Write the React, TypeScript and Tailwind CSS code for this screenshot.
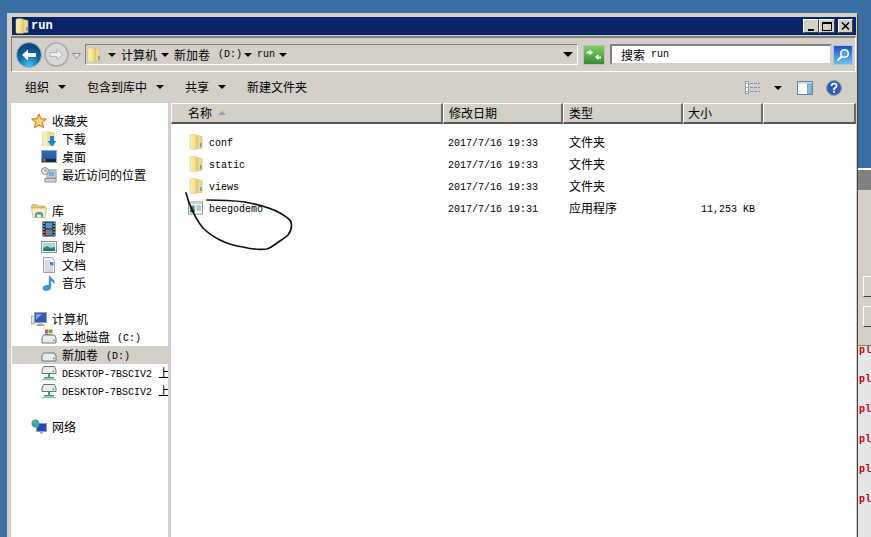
import { useId } from 'react';

const CJK = '"Noto Sans CJK SC", "Liberation Sans", sans-serif';

function Lat({ children, bold, className = '' }: { children: React.ReactNode; bold?: boolean; className?: string }) {
  return <span className={`font-['Liberation_Mono',monospace] text-[10px] ${bold ? 'font-bold' : ''} ${className}`}>{children}</span>;
}

function Caret({ className = '' }: { className?: string }) {
  return <span className={`inline-block h-0 w-0 shrink-0 border-x-[4px] border-t-[4px] border-x-transparent border-t-black ${className}`} />;
}

function Folder({ size = 16 }: { size?: number }) {
  const id = useId();
  return (
    <svg width={size} height={size} viewBox="0 0 16 16" className="shrink-0">
      <defs>
        <linearGradient id={id} x1="0" x2="1" y1="0" y2="0">
          <stop offset="0" stopColor="#fdf3c0" />
          <stop offset="0.6" stopColor="#f6e08e" />
          <stop offset="1" stopColor="#e2c670" />
        </linearGradient>
      </defs>
      <path d="M9 1.5 L14 2.5 V14.5 H9 Z" fill="#efd888" stroke="#d2b766" strokeWidth="0.6" />
      <rect x="12" y="9" width="1.6" height="4" fill="#58a4c8" />
      <path d="M2 2 Q2 .8 3.2 .8 L8 .8 Q9.4 1 9.4 2.4 V15.2 H3.2 Q2 15.2 2 14 Z" fill={`url(#${id})`} stroke="#dcc272" strokeWidth="0.6" />
    </svg>
  );
}

function Star() {
  return (
    <svg width="16" height="16" viewBox="0 0 16 16">
      <path d="M8 .8 L10.1 5.6 L15.4 6.1 L11.4 9.6 L12.6 14.8 L8 12.1 L3.4 14.8 L4.6 9.6 L.6 6.1 L5.9 5.6 Z" fill="#fbc24a" stroke="#d8752a" strokeWidth="1" />
      <path d="M8 4 L9 7 L12 7.5 L9.5 9.5 L10 12 L8 10.6 L6 12 L6.5 9.5 L4 7.5 L7 7 Z" fill="#fde48f" />
    </svg>
  );
}

function Downloads() {
  return (
    <svg width="16" height="16" viewBox="0 0 16 16">
      <path d="M1.5 1 H8 L13 2 V14.5 H1.5 Z" fill="#f2dc95" stroke="#d3b96a" strokeWidth="0.7" />
      <path d="M1.5 1 H6.5 V15 H1.5 Z" fill="#f9edbb" />
      <path d="M9 5 H13 V10 H15.5 L11 15.5 L6.5 10 H9 Z" fill="#1f7fd0" />
    </svg>
  );
}

function Desktop() {
  return (
    <svg width="16" height="16" viewBox="0 0 16 16">
      <rect x="0.5" y="1.5" width="15" height="12" fill="#1d4f9c" stroke="#8faecb" />
      <rect x="1" y="2" width="14" height="7" fill="#2c62b2" />
      <rect x="1" y="10" width="14" height="3" fill="#1e2a3c" />
      <rect x="2" y="10" width="2.5" height="2.5" fill="#e45d3a" />
    </svg>
  );
}

function Recent() {
  return (
    <svg width="16" height="16" viewBox="0 0 16 16">
      <rect x="6" y="3" width="9" height="8" fill="#e4e6e4" stroke="#8a8f8f" />
      <rect x="7.5" y="4.5" width="6" height="5" fill="#6fb0c9" />
      <rect x="4" y="11.5" width="11" height="3.5" fill="#d2d4d2" stroke="#8a8f8f" />
      <circle cx="4" cy="4" r="3.4" fill="#eef0ee" stroke="#7f8585" />
      <path d="M4 2 V4 H6" fill="none" stroke="#555" strokeWidth="0.8" />
    </svg>
  );
}

function Library() {
  return (
    <svg width="16" height="16" viewBox="0 0 16 16">
      <path d="M0.5 3 Q0.5 1.5 2 1.5 H6 L7.5 3 H14 V5 H.5 Z" fill="#e5c877" stroke="#c6a758" strokeWidth="0.6" />
      <path d="M.5 5 H15.5 L14 14.5 H2 Z" fill="#fbeeb8" stroke="#c9ad5e" strokeWidth="0.7" />
      <path d="M4 14 V10.5 Q8 7 12 10.5 V14 H10 V11.5 H6 V14 Z" fill="#4f92c4" />
    </svg>
  );
}

function Video() {
  return (
    <svg width="16" height="16" viewBox="0 0 16 16">
      <rect x="1.5" y="0.5" width="13" height="15" fill="#10202a" />
      <rect x="4.5" y="1.5" width="7" height="6" fill="#4d98d6" />
      <rect x="4.5" y="8.5" width="7" height="6" fill="#c46a45" />
      <path d="M5 13 L9 9.5 L11 11 V14 H5 Z" fill="#3f8fd0" />
      {[2, 5, 8, 11, 14].map(y => (
        <g key={y}>
          <rect x="2.3" y={y - 0.5} width="1.3" height="1.3" fill="#d7eef5" />
          <rect x="12.4" y={y - 0.5} width="1.3" height="1.3" fill="#d7eef5" />
        </g>
      ))}
    </svg>
  );
}

function Picture() {
  return (
    <svg width="16" height="16" viewBox="0 0 16 16">
      <rect x="0.5" y="2.5" width="15" height="11" fill="#eef3f3" stroke="#8e9694" />
      <rect x="2" y="4" width="12" height="8" fill="#a8d4ea" />
      <path d="M2 9 L6 7 L10 9 L14 7.5 V12 H2 Z" fill="#3d8a5a" />
      <rect x="2" y="10.5" width="12" height="1.5" fill="#1f6e9c" />
    </svg>
  );
}

function Doc() {
  return (
    <svg width="16" height="16" viewBox="0 0 16 16">
      <path d="M2.5 .5 H10.5 L13.5 3.5 V15.5 H2.5 Z" fill="#f6f7fb" stroke="#9a9fb0" />
      <path d="M4 4 H9 M4 6 H8 M4 8 H8 M4 10 H12 M4 12 H12 M4 14 H12" stroke="#a5aec8" strokeWidth="0.8" />
      <rect x="9" y="5" width="3.5" height="3.5" fill="#4b8ed0" />
    </svg>
  );
}

function Music() {
  return (
    <svg width="16" height="16" viewBox="0 0 16 16">
      <path d="M8.5 .5 Q9.5 3 12.5 5 Q14 6.5 13 8.5 Q12.5 6.5 9.8 5.5 V12.5 Q9.5 15.5 5 15.5 Q1.5 15.5 2 12.5 Q3 9.8 7 10.2 L8 10.5 Z" fill="#3a94d8" stroke="#2a78b8" strokeWidth="0.5" />
    </svg>
  );
}

function Computer() {
  return (
    <svg width="16" height="16" viewBox="0 0 16 16">
      <rect x="0.5" y="5" width="3" height="8" fill="#dfe3e3" stroke="#8d9595" strokeWidth="0.7" />
      <rect x="3.5" y="1.5" width="12" height="10" fill="#2c56c0" stroke="#93a2a8" />
      <path d="M5 3 H11 L5 9 Z" fill="#7da0e8" />
      <rect x="7.5" y="11.5" width="4" height="2" fill="#b5bcbc" />
      <rect x="5.5" y="13.5" width="8" height="1.5" fill="#8d9595" />
    </svg>
  );
}

function Drive({ win, net }: { win?: boolean; net?: boolean }) {
  return (
    <svg width="16" height="16" viewBox="0 0 16 16">
      {win && (
        <g>
          <rect x="4" y="0.5" width="3.5" height="3.5" fill="#e2572c" />
          <rect x="8" y="0.5" width="3.5" height="3.5" fill="#6aaf3c" />
          <rect x="4" y="4.5" width="3.5" height="3.5" fill="#3a76d0" />
          <rect x="8" y="4.5" width="3.5" height="3.5" fill="#f0c030" />
        </g>
      )}
      <path d={net ? 'M2.5 1.5 H13.5 L15 5 V8.5 H1 V5 Z' : 'M2.5 6 H13.5 L15 9 V14 H1 V9 Z'} fill="#e8ecec" stroke="#6d7676" />
      <rect x={net ? 11.5 : 12} y={net ? 5.5 : 10.5} width="1.6" height="1.6" fill="#55b34a" />
      {net && (
        <g>
          <rect x="7" y="9" width="2" height="3" fill="#2fb36a" />
          <rect x="3" y="12" width="10" height="1.6" fill="#2fb36a" />
          <rect x="1" y="14" width="14" height="1.2" fill="#a8b2b2" />
        </g>
      )}
    </svg>
  );
}

function Network() {
  return (
    <svg width="16" height="16" viewBox="0 0 16 16">
      <rect x="5.5" y="4.5" width="10" height="8" fill="#2248c0" stroke="#93a2a8" />
      <rect x="9" y="12.5" width="3" height="2" fill="#a8b2b2" />
      <circle cx="4.5" cy="4.5" r="4" fill="#3a9ad8" />
      <path d="M2 2.5 Q4 1 5.5 2.5 L4 5 L2 5 Z" fill="#4fb848" />
      <path d="M5 6 L7.5 5 L7 7.5 L5 8 Z" fill="#4fb848" />
    </svg>
  );
}

function ExeIcon() {
  return (
    <svg width="16" height="14" viewBox="0 0 16 14">
      <rect x="0.5" y="0.5" width="15" height="13" fill="#f4f7f8" stroke="#8b9396" />
      <rect x="1" y="1" width="14" height="2" fill="#c9d3d8" />
      <rect x="2" y="4.5" width="5" height="7" fill="#2f8a8a" />
      <path d="M2 11.5 L5 7.5 L7 9.5 V11.5 Z" fill="#2d5a30" />
      <path d="M9 5 H14 M9 7 H14 M9 9 H14" stroke="#7d9bb0" />
    </svg>
  );
}

function ViewsIcon() {
  return (
    <svg width="15" height="13" viewBox="0 0 15 13">
      <rect x="0.5" y="0.5" width="3" height="12" fill="#fff" stroke="#7d9ab8" />
      <rect x="1.5" y="2" width="1" height="1" fill="#c0392b" />
      <rect x="1.5" y="6" width="1" height="1" fill="#c0392b" />
      <rect x="1.5" y="10" width="1" height="1" fill="#c0392b" />
      <path d="M5 2.5 H15 M5 6.5 H15 M5 10.5 H15" stroke="#7f93aa" strokeDasharray="3 1" />
    </svg>
  );
}

function PaneIcon() {
  return (
    <svg width="16" height="14" viewBox="0 0 16 14">
      <rect x="0.5" y="0.5" width="15" height="13" fill="#fff" stroke="#5f86a5" />
      <rect x="1" y="1" width="14" height="2" fill="#cfe0ec" />
      <rect x="10.5" y="3" width="4.5" height="10" fill="#7fc0d8" stroke="#5f86a5" strokeWidth="0.6" />
    </svg>
  );
}

function HelpIcon() {
  return (
    <svg width="16" height="16" viewBox="0 0 16 16">
      <circle cx="8" cy="8" r="7.5" fill="#2f5fb5" stroke="#9aa3b5" />
      <path d="M5.5 6 Q5.8 3.5 8.2 3.5 Q10.8 3.6 10.6 5.8 Q10.4 7.2 8.8 8 Q8 8.6 8 10" fill="none" stroke="#fff" strokeWidth="1.7" />
      <rect x="7.1" y="10.8" width="1.8" height="1.8" fill="#fff" />
    </svg>
  );
}

function NavButtons() {
  return (
    <div className="flex items-center">
      <svg width="26" height="26" viewBox="0 0 26 26">
        <defs>
          <radialGradient id="backFill" cx="0.5" cy="0.9" r="0.75">
            <stop offset="0" stopColor="#3fc3f0" />
            <stop offset="0.55" stopColor="#0c6fae" />
            <stop offset="1" stopColor="#0a4a7e" />
          </radialGradient>
        </defs>
        <circle cx="13" cy="13" r="12.5" fill="url(#backFill)" stroke="#9fb4c4" />
        <path d="M6 13 L12 7.5 V11 H20 V15 H12 V18.5 Z" fill="#fff" />
      </svg>
      <svg width="25" height="25" viewBox="0 0 25 25" className="ml-[2px]">
        <circle cx="12.5" cy="12.5" r="11.5" fill="#d8d8d8" stroke="#a9a9a9" strokeWidth="1.5" />
        <path d="M19 12.5 L13 7.5 V10.5 H6 V14.5 H13 V17.5 Z" fill="#ececec" stroke="#a8a8a8" strokeWidth="0.8" />
      </svg>
      <svg width="9" height="6" viewBox="0 0 9 6" className="ml-[3px] mt-[2px]">
        <path d="M.5 .5 H8.5 L4.5 5.5 Z" fill="#e8e8e8" stroke="#8a8a8a" />
      </svg>
    </div>
  );
}

function AddressBar() {
  return (
    <div className="mt-[1px] flex h-[36px] items-center border border-t-2 border-[#808080] border-r-white border-b-white pl-[4px]">
      <NavButtons />
      <div className="ml-[4px] flex h-[21px] w-[493px] items-center border-t border-l border-[#808080] bg-[#d4d0c8] border-r border-b border-r-white border-b-white text-[12px]">
        <Folder size={16} />
        <Caret className="ml-[6px]" />
        <span className="ml-[5px]">计算机</span>
        <Caret className="ml-[4px]" />
        <span className="ml-[5px]">新加卷</span>
        <Lat className="ml-[8px]">(D:)</Lat>
        <Caret className="ml-[2px]" />
        <Lat className="ml-[5px]">run</Lat>
        <Caret className="ml-[4px]" />
      </div>
      <Caret className="ml-[-15px] mr-[6px] border-x-[5px] border-t-[5px]" />
      <div className="ml-[4px] flex h-[20px] w-[22px] items-center justify-center border border-[#b5c4b5] bg-gradient-to-b from-[#7fcf5f] to-[#2f8f2f]">
        <svg width="16" height="12" viewBox="0 0 16 12">
          <path d="M7 3.5 L3.5 .5 V2.5 H0.5 V4.5 H3.5 V6.5 Z" fill="#fff" />
          <path d="M9 8 L12.5 11.5 V9.5 H15 V7.5 H12.5 V5 Z" fill="#fff" />
        </svg>
      </div>
      <div className="ml-[5px] flex h-[21px] w-[222px] items-center border-2 border-[#808080] border-r-[#d4d0c8] border-b-[#d4d0c8] bg-white pl-[9px] text-[12px] text-black">
        <span>搜索</span>
        <Lat className="ml-[6px]">run</Lat>
      </div>
      <div className="ml-[1px] flex h-[20px] w-[20px] items-center justify-center border border-[#a9c4e4] bg-gradient-to-b from-[#1f4fc8] to-[#6fc0ee]">
        <svg width="14" height="14" viewBox="0 0 14 14">
          <circle cx="8.5" cy="5.5" r="3.8" fill="#5f9fe0" stroke="#fff" strokeWidth="1.6" />
          <path d="M5.5 8.5 L1.5 12.5" stroke="#fff" strokeWidth="2.2" />
        </svg>
      </div>
    </div>
  );
}

function Toolbar() {
  return (
    <div className="flex h-[31px] items-center text-[12px] text-black">
      <div className="flex items-center pb-[2px]">
        <span className="ml-[14px]">组织</span>
        <Caret className="ml-[9px]" />
        <span className="ml-[21px]">包含到库中</span>
        <Caret className="ml-[9px]" />
        <span className="ml-[21px]">共享</span>
        <Caret className="ml-[9px]" />
        <span className="ml-[21px]">新建文件夹</span>
      </div>
      <div className="ml-auto flex items-center pr-[14px]">
        <ViewsIcon />
        <Caret className="ml-[14px]" />
        <span className="ml-[15px]"><PaneIcon /></span>
        <span className="ml-[13px]"><HelpIcon /></span>
      </div>
    </div>
  );
}

type NavItem = { label: React.ReactNode; icon: React.ReactNode; selected?: boolean };

const groups: { head: NavItem; items: NavItem[] }[] = [
  {
    head: { label: '收藏夹', icon: <Star /> },
    items: [
      { label: '下载', icon: <Downloads /> },
      { label: '桌面', icon: <Desktop /> },
      { label: '最近访问的位置', icon: <Recent /> },
    ],
  },
  {
    head: { label: '库', icon: <Library /> },
    items: [
      { label: '视频', icon: <Video /> },
      { label: '图片', icon: <Picture /> },
      { label: '文档', icon: <Doc /> },
      { label: '音乐', icon: <Music /> },
    ],
  },
  {
    head: { label: '计算机', icon: <Computer /> },
    items: [
      { label: <>本地磁盘<Lat className="ml-[7px] align-[1px]">(C:)</Lat></>, icon: <Drive win /> },
      { label: <>新加卷<Lat className="ml-[8px] align-[1px]">(D:)</Lat></>, icon: <Drive />, selected: true },
      { label: <><Lat className="align-[1px]">DESKTOP-7BSCIV2</Lat><span className="ml-[6px]">上</span></>, icon: <Drive net /> },
      { label: <><Lat className="align-[1px]">DESKTOP-7BSCIV2</Lat><span className="ml-[6px]">上</span></>, icon: <Drive net /> },
    ],
  },
  { head: { label: '网络', icon: <Network /> }, items: [] },
];

function Sidebar() {
  return (
    <aside className="flex w-[157px] shrink-0 flex-col gap-[18px] overflow-hidden bg-white pt-[9px] text-[12px] text-black">
      {groups.map((g, i) => (
        <div key={i} className="flex flex-col">
          <div className="flex h-[18px] items-center gap-[5px] pl-[20px]">
            {g.head.icon}
            <span className="whitespace-nowrap">{g.head.label}</span>
          </div>
          {g.items.map((item, j) => (
            <div
              key={j}
              className={`ml-[1px] flex h-[18px] items-center gap-[5px] pl-[29px] ${item.selected ? 'bg-[#d4d0c8]' : ''}`}
            >
              <span className="shrink-0">{item.icon}</span>
              <span className="whitespace-nowrap">{item.label}</span>
            </div>
          ))}
        </div>
      ))}
    </aside>
  );
}

const columns = [
  { label: '名称', w: 'w-[272px]', pl: 'pl-[16px]', sort: true },
  { label: '修改日期', w: 'w-[120px]', pl: 'pl-[5px]' },
  { label: '类型', w: 'w-[120px]', pl: 'pl-[5px]' },
  { label: '大小', w: 'w-[80px]', pl: 'pl-[4px]' },
  { label: '', w: 'flex-1', pl: '' },
];

const files = [
  { name: 'conf', icon: <Folder />, date: '2017/7/16 19:33', type: '文件夹', size: '' },
  { name: 'static', icon: <Folder />, date: '2017/7/16 19:33', type: '文件夹', size: '' },
  { name: 'views', icon: <Folder />, date: '2017/7/16 19:33', type: '文件夹', size: '' },
  { name: 'beegodemo', icon: <ExeIcon />, date: '2017/7/16 19:31', type: '应用程序', size: '11,253 KB' },
];

function FileList() {
  return (
    <section className="relative flex flex-1 flex-col bg-white text-[12px] text-black">
      <div className="flex h-[21px] shrink-0 bg-[#d4d0c8]">
        {columns.map((c, i) => (
          <div
            key={i}
            className={`flex items-center border-t border-l border-t-white border-l-white border-r-2 border-b-2 border-r-[#6b6b6b] border-b-[#555555] ${c.w} ${c.pl}`}
          >
            {c.label}
            {c.sort && <span className="ml-[6px] inline-block h-0 w-0 border-x-[4px] border-b-[4px] border-x-transparent border-b-[#a0a0a0]" />}
          </div>
        ))}
      </div>
      <div className="flex flex-col pt-[7px]">
        {files.map(f => (
          <div key={f.name} className="flex h-[22px] items-center">
            <div className="flex w-[272px] items-center gap-[6px] pl-[17px]">
              <span className="flex w-[15px] shrink-0 justify-center">{f.icon}</span>
              <Lat className="pt-[2px]">{f.name}</Lat>
            </div>
            <div className="w-[121px] pb-[2px] pl-[5px]"><Lat>{f.date}</Lat></div>
            <div className="w-[120px] pl-[5px]">{f.type}</div>
            <div className="w-[71px] pb-[2px] text-right"><Lat>{f.size}</Lat></div>
          </div>
        ))}
      </div>
      {/* hand drawn marker over the exe */}
      <svg width="120" height="70" viewBox="0 0 120 70" className="absolute left-[14px] top-[88px]" fill="none">
        <path
          d="M1 2 C3 7 3 11 5 14 C9 24 13 31 18 37 C23 42 29 46 35 49 C43 53 50 55 58 56 C66 58 74 59 82 58 C86 57 89 54 92 52 C96 49 100 47 103 44 C106 40 107 35 106 31 C104 27 100 25 95 22 C84 16 70 13 60 11 C44 9 34 9 22 9"
          stroke="#111"
          strokeWidth="1.7"
          strokeLinecap="round"
        />
      </svg>
    </section>
  );
}

function BackWindow() {
  return (
    <div className="flex flex-1 flex-col">
      <div className="h-[168px] shrink-0" />
      <div className="h-[2px] shrink-0 bg-white" />
      <div className="h-[20px] shrink-0 bg-[#808080]" />
      <div className="flex h-[155px] shrink-0 flex-col gap-[9px] bg-[#d4d0c8] pl-[5px] pt-[86px]">
        <div className="h-[21px] border border-r-0 border-white border-b-[#404040]" />
        <div className="h-[21px] border border-r-0 border-white border-b-[#404040]" />
      </div>
      <div className="flex flex-1 flex-col gap-[18px] overflow-hidden border-t border-[#808080] bg-[#e6e6e6] pl-[1px] leading-[12px] text-[#cc0000]">
        <div className="-mt-[6px] h-[12px]"><Lat bold>pl</Lat></div>
        {[0, 1, 2, 3, 4].map(i => (
          <div key={i} className={`h-[12px] ${i === 0 ? '-mt-[1px]' : ''}`}><Lat bold>pl</Lat></div>
        ))}
      </div>
    </div>
  );
}

export default function App() {
  return (
    <div style={{ fontFamily: CJK }} className="flex h-[537px] w-[871px] overflow-hidden bg-[#3a6ea5] pl-[7px]">
      <div className="mt-[13px] flex w-[851px] shrink-0 flex-col border border-b-0 border-[#d4d0c8] border-r-[#404040] bg-[#d4d0c8] pl-[3px] pr-[1px] pt-[3px]">
        <header className="ml-[1px] flex h-[18px] shrink-0 items-center bg-[#0a246a] pl-[2px] text-white">
          <Folder />
          <span className="ml-[1px] pb-[1px] font-['Liberation_Mono',monospace] text-[12px] font-bold">run</span>
          <div className="ml-auto flex items-center pr-[3px]">
            <button className="flex h-[14px] w-[16px] items-end justify-center border border-white border-r-[#404040] border-b-[#404040] bg-[#d4d0c8] pb-[1px]">
              <span className="h-[2px] w-[6px] bg-black" />
            </button>
            <button className="flex h-[14px] w-[16px] items-center justify-center border border-white border-r-[#404040] border-b-[#404040] bg-[#d4d0c8]">
              <span className="h-[9px] w-[10px] border border-t-2 border-black" />
            </button>
            <button className="ml-[3px] flex h-[14px] w-[15px] items-center justify-center border border-white border-r-[#404040] border-b-[#404040] bg-[#d4d0c8]">
              <svg width="9" height="8" viewBox="0 0 9 8"><path d="M1 0.5 L8 7.5 M8 0.5 L1 7.5" stroke="#000" strokeWidth="1.5" /></svg>
            </button>
          </div>
        </header>
        <AddressBar />
        <Toolbar />
        <div className="-ml-[1px] flex min-h-0 flex-1 gap-[3px] border-l border-[#d4d0c8]">
          <Sidebar />
          <FileList />
        </div>
      </div>
      <BackWindow />
    </div>
  );
}
